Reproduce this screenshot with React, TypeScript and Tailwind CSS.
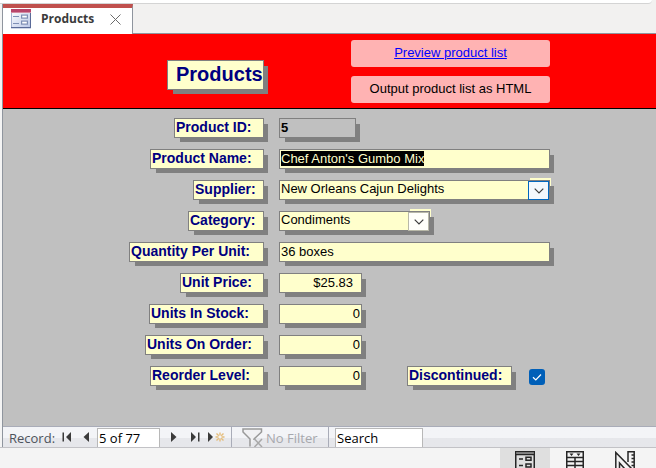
import { useEffect, useRef, type ReactNode } from "react";

const BOX = "border border-[#808080] shadow-[5px_5px_0_-1px_#808080]";
const FIELD = `h-5 bg-[#ffffcc] px-px pb-[2px] text-[13px] leading-4 text-black outline-none ${BOX}`;

function FormIcon() {
  return (
    <svg width="20" height="20" viewBox="0 0 20 20" aria-hidden="true">
      <defs>
        <linearGradient id="formBody" x1="0" y1="0" x2="1" y2="1">
          <stop offset="0" stopColor="#ffffff" />
          <stop offset="1" stopColor="#b9c6e6" />
        </linearGradient>
      </defs>
      <rect x="0.5" y="1" width="19" height="18" fill="url(#formBody)" stroke="#a3b0d0" />
      <rect x="0" y="0" width="20" height="3" fill="#b8456a" />
      <rect x="0" y="3" width="20" height="1" fill="#d58aa2" />
      <path d="M0 18.5h20M19.5 4v15" stroke="#5a6a98" />
      <path d="M2 7.5h6M2 14.5h6" stroke="#7f8fb5" strokeWidth="1.2" />
      <rect x="10.6" y="6.1" width="5.8" height="3" fill="#fff" stroke="#7f8fb5" strokeWidth="1.2" />
      <rect x="10.6" y="12.1" width="5.8" height="3" fill="#fff" stroke="#7f8fb5" strokeWidth="1.2" />
    </svg>
  );
}

function Row({
  id,
  label,
  width,
  children,
}: {
  id: string;
  label: string;
  width: string;
  children: ReactNode;
}) {
  return (
    <div className="flex h-[31px] items-start gap-[15px]">
      <div className="flex w-[261px] shrink-0 justify-end">
        <FieldLabel id={id} width={width}>
          {label}
        </FieldLabel>
      </div>
      {children}
    </div>
  );
}

function FieldLabel({ id, width, children }: { id: string; width: string; children: string }) {
  return (
    <label
      htmlFor={id}
      className={`h-5 whitespace-nowrap bg-[#ffffcc] pl-px text-[14px] font-bold leading-4 text-[#000080] ${BOX} ${width}`}
    >
      {children}
    </label>
  );
}

function Combo({ id, value, width, active }: { id: string; value: string; width: string; active?: boolean }) {
  return (
    <div className={`relative isolate ${width}`}>
      <span className="absolute -right-px -top-[2px] -z-10 h-2 w-[21px] bg-[#ffffcc]" />
      <select id={id} defaultValue={value} className={`block w-full appearance-none ${FIELD}`}>
        <option>{value}</option>
      </select>
      <span
        className={`pointer-events-none absolute bottom-0 right-px top-px flex w-[21px] items-center justify-center border ${
          active ? "border-[#0067c0] bg-[#f3f8fd]" : "border-[#b8b8a8] bg-[#fffffa]"
        }`}
      >
        <svg width="10" height="6" viewBox="0 0 10 6" fill="none" stroke="#3c3c3c" strokeWidth="1.2" aria-hidden="true">
          <path d="M0.7 0.7 5 5 9.3 0.7" />
        </svg>
      </span>
    </div>
  );
}

function NumberField({ id, value, pad }: { id: string; value: string; pad?: boolean }) {
  return <input id={id} defaultValue={value} className={`w-[83px] text-right ${FIELD} ${pad ? "pr-2" : ""}`} />;
}

function NavButton({ label, width, icon, children }: { label: string; width: string; icon: number; children: ReactNode }) {
  return (
    <button type="button" aria-label={label} className={`flex h-full shrink-0 items-center ${width}`}>
      <svg width={icon} height="10" viewBox={`0 0 ${icon} 10`} fill="#3b3b3b" aria-hidden="true">
        {children}
      </svg>
    </button>
  );
}

function ViewButton({ label, active, children }: { label: string; active?: boolean; children: ReactNode }) {
  return (
    <button
      type="button"
      aria-label={label}
      className={`flex h-full w-[50px] items-start justify-center overflow-hidden pt-[3px] ${active ? "bg-[#dfdfdf]" : ""}`}
    >
      <svg width="20" height="18" viewBox="0 0 20 18" className="shrink-0" fill="none" stroke="#262626" strokeWidth="1.5" aria-hidden="true">
        {children}
      </svg>
    </button>
  );
}

export default function App() {
  const nameRef = useRef<HTMLInputElement>(null);
  useEffect(() => {
    nameRef.current?.focus();
    nameRef.current?.select();
  }, []);

  return (
    <div className="flex min-h-screen flex-col bg-[#f4f4f4] font-['Liberation_Sans',Arial,sans-serif]">
      <div className="h-1 shrink-0 bg-[#f2f1f0] pr-1">
        <div className="h-full rounded-br-md border-b border-[#d4d4d4] bg-white" />
      </div>

      <div className="ml-[2px] flex flex-1 flex-col border-l border-[#8f959e]">
        <div className="flex h-[30px] shrink-0 bg-[#f2f1f0]">
          <div className="flex w-[130px] items-center border-r border-t-4 border-r-[#8f959e] border-t-[#c0504d] bg-white pb-1 pl-2 font-['Open_Sans','Noto_Sans',sans-serif]">
            <FormIcon />
            <span className="ml-[10px] text-[12px] font-bold leading-4 text-[#3b3b3b]">Products</span>
            <button type="button" aria-label="Close tab" className="ml-4">
              <svg width="11" height="11" viewBox="0 0 11 11" stroke="#6b6b6b" aria-hidden="true">
                <path d="M0.5 0.5l10 10M10.5 0.5l-10 10" />
              </svg>
            </button>
          </div>
          <div className="flex-1 border-b border-[#8f959e]" />
        </div>

        <header className="flex h-[75px] shrink-0 items-start border-b border-black bg-[#ff0000] pt-[6px]">
          <div className="flex w-[261px] justify-end pt-5">
            <h1 className={`h-[30px] w-[97px] bg-[#ffffcc] pl-2 text-[20px] font-bold leading-[26px] text-[#000080] ${BOX}`}>
              Products
            </h1>
          </div>
          <div className="ml-[87px] flex w-[199px] flex-col gap-[9px] text-center text-[13px] leading-[25px]">
            <a href="#preview" className="h-[27px] rounded-[3px] bg-[#ffb3b3] text-[#0000ff] underline">
              Preview product list
            </a>
            <button type="button" className="flex h-[27px] justify-center rounded-[3px] bg-[#ffb3b3] text-black">
              Output product list as HTML
            </button>
          </div>
        </header>

        <main className="flex-1 bg-[#c0c0c0] pt-[9px]">
          <Row id="pid" label="Product ID:" width="w-[90px]">
            <input
              id="pid"
              readOnly
              defaultValue="5"
              className={`h-5 w-[77px] bg-[#c0c0c0] px-px pb-[2px] text-[13px] font-bold leading-4 text-black outline-none ${BOX}`}
            />
          </Row>
          <Row id="pname" label="Product Name:" width="w-[114px]">
            <input
              id="pname"
              ref={nameRef}
              defaultValue="Chef Anton's Gumbo Mix"
              className={`w-[271px] caret-transparent selection:bg-black selection:text-[#ffffcc] ${FIELD}`}
            />
          </Row>
          <Row id="supplier" label="Supplier:" width="w-[71px]">
            <Combo id="supplier" value="New Orleans Cajun Delights" width="w-[271px]" active />
          </Row>
          <Row id="category" label="Category:" width="w-[76px]">
            <Combo id="category" value="Condiments" width="w-[151px]" />
          </Row>
          <Row id="qty" label="Quantity Per Unit:" width="w-[135px]">
            <input id="qty" defaultValue="36 boxes" className={`w-[271px] ${FIELD}`} />
          </Row>
          <Row id="price" label="Unit Price:" width="w-[84px]">
            <NumberField id="price" value="$25.83" pad />
          </Row>
          <Row id="stock" label="Units In Stock:" width="w-[115px]">
            <NumberField id="stock" value="0" />
          </Row>
          <Row id="order" label="Units On Order:" width="w-[119px]">
            <NumberField id="order" value="0" />
          </Row>
          <Row id="reorder" label="Reorder Level:" width="w-[114px]">
            <NumberField id="reorder" value="0" />
            <div className="ml-[30px] flex gap-[17px]">
              <FieldLabel id="disc" width="w-[105px]">
                Discontinued:
              </FieldLabel>
              <div className="relative mt-[3px] size-4">
                <input id="disc" type="checkbox" defaultChecked className="block size-4 appearance-none rounded-[3px] bg-[#005fb8]" />
                <svg
                  width="16"
                  height="16"
                  viewBox="0 0 16 16"
                  fill="none"
                  stroke="#fff"
                  strokeWidth="1.2"
                  className="pointer-events-none absolute inset-0"
                  aria-hidden="true"
                >
                  <path d="M4 8.3 6.8 11 12 5.5" />
                </svg>
              </div>
            </div>
          </Row>
        </main>

        <nav className="flex h-[21px] shrink-0 items-center overflow-hidden border-t border-[#a9acb8] bg-linear-to-b from-[#f3f4f7] from-55% to-[#e6e7eb] to-55% font-['Open_Sans','Noto_Sans',sans-serif] text-[13px] leading-5">
          <label htmlFor="rec" className="w-[59px] shrink-0 pl-[6px] pt-px text-[#4d525c]">
            Record:
          </label>
          <NavButton label="First record" width="w-[21px]" icon={9}>
            <path d="M0.5 0.5h1.5v9H0.5zM9 0v10L4 5z" />
          </NavButton>
          <NavButton label="Previous record" width="w-[11px]" icon={6}>
            <path d="M6 0v10L0.5 5z" />
          </NavButton>
          <input
            id="rec"
            defaultValue="5 of 77"
            className="ml-[3px] h-[19px] w-[63px] self-end border border-b-0 border-[#b8b8b8] bg-white pl-px text-black outline-none"
          />
          <NavButton label="Next record" width="ml-[11px] w-5" icon={6}>
            <path d="M0 0v10l5.5-5z" />
          </NavButton>
          <NavButton label="Last record" width="w-[17px]" icon={9}>
            <path d="M0 0v10l5-5zM7 0.5h1.5v9H7z" />
          </NavButton>
          <NavButton label="New record" width="w-[23px]" icon={17}>
            <path d="M0 0v10l5-5z" />
            <g stroke="#e5bd7c" strokeWidth="1.4">
              <path d="M12 0.5v3M12 6.5v3M7.5 5h3M13.5 5h3M8.5 1.5l2.3 2.3M15.5 1.5l-2.3 2.3M8.5 8.5l2.3-2.3M15.5 8.5l-2.3-2.3" />
            </g>
          </NavButton>
          <div className="flex h-full w-[98px] shrink-0 items-center border-x border-[#a9acb8] pl-[10px] text-[#a6a8ad]">
            <svg width="21" height="19" viewBox="0 0 21 19" fill="#f1f1f3" stroke="#999" strokeWidth="1.5" className="shrink-0" aria-hidden="true">
              <path d="M12 12V11l7.5-7V1H1v3l7 7v7.5" />
              <path d="M12.5 11l7.5 8M20 11l-7.5 8" stroke="#a8a8a8" />
            </svg>
            <span className="ml-[3px] whitespace-nowrap pt-px">No Filter</span>
          </div>
          <input
            aria-label="Search"
            defaultValue="Search"
            className="ml-[6px] h-[19px] w-[88px] self-end border border-b-0 border-[#b8b8b8] bg-white pl-px text-black outline-none"
          />
        </nav>
      </div>

      <footer className="flex h-[21px] shrink-0 justify-end overflow-hidden border-t border-[#c2c2c6] bg-[#f4f4f4] pr-[6px]">
        <ViewButton label="Form view" active>
          <path d="M0.75 18V0.75h18.5V18M1 3.5h18" />
          <path d="M1 2h18" stroke="#777" />
          <path d="M4 8h4M4 14.5h4M11 6.2h5v3.1h-5zM11 13h5v3h-5z" />
        </ViewButton>
        <ViewButton label="Datasheet view">
          <path d="M1.75 18V0.75h16.5V18M2 6.5h16M2 10.5h16M2 14.5h16M10 6.5V18" />
          <path d="M4.5 2.5h4l-2 2.5zM11.5 2.5h4l-2 2.5z" fill="#262626" stroke="none" />
        </ViewButton>
        <ViewButton label="Design view">
          <path d="M0.8 18V1.5L17 18M4.5 18v-6l5.5 6" />
          <path d="M13 11V0.75h6.2V18M16.5 4h3M16.5 7.5h3M16.5 11h3M16.5 14.5h3" />
        </ViewButton>
      </footer>
    </div>
  );
}
